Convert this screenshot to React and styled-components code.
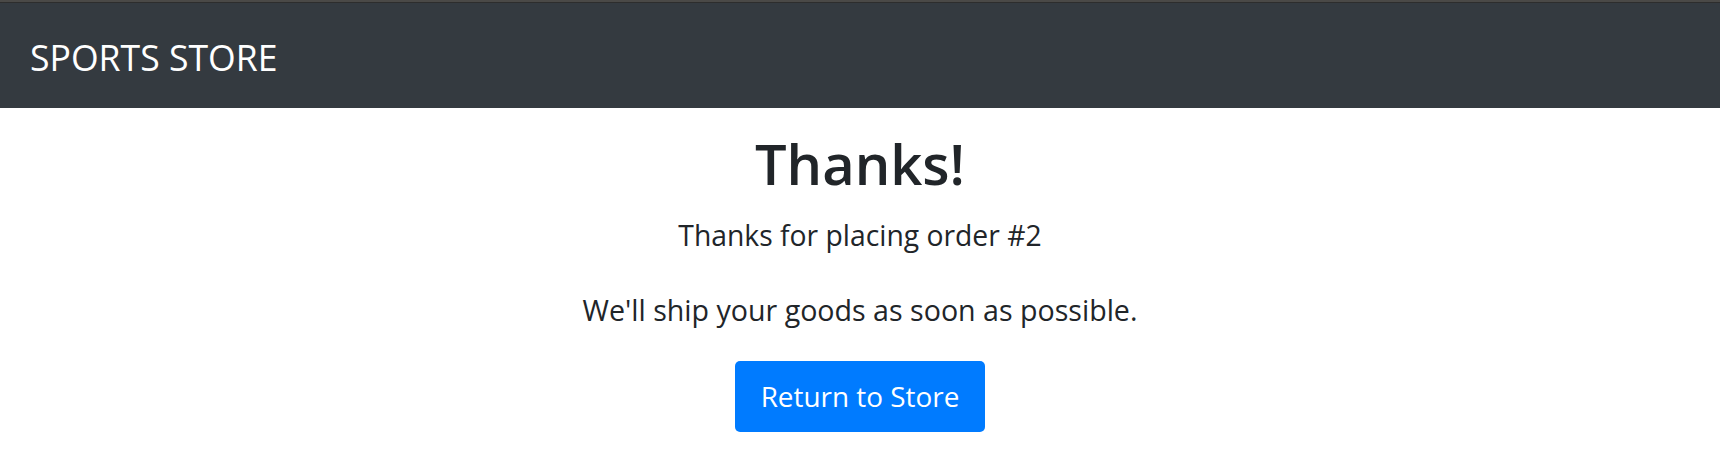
import React from "react";
import styled, { createGlobalStyle } from "styled-components";

const GlobalStyle = createGlobalStyle`
  html, body {
    margin: 0;
    padding: 0;
    background: #ffffff;
  }
  body {
    font-family: "Open Sans", "Noto Sans", "Liberation Sans", sans-serif;
    color: #212529;
  }
  * { box-sizing: border-box; }
`;

const Page = styled.div`
  width: 100%;
  min-height: 471px;
  display: flex;
  flex-direction: column;
`;

const WindowEdge = styled.div`
  height: 3px;
  background: #4a4947;
  border-bottom: 1px solid #2d2d2d;
`;

const Navbar = styled.nav`
  height: 105px;
  background: #343a40;
  padding: 30px 30px 0;
  display: flex;
  align-items: flex-start;
`;

const Brand = styled.span`
  color: #ffffff;
  font-size: 35.6px;
  line-height: 49px;
  font-weight: 400;
  white-space: nowrap;
`;

const Main = styled.main`
  padding-top: 21px;
  display: flex;
  flex-direction: column;
  align-items: center;
  text-align: center;
`;

const Title = styled.h1`
  margin: 0;
  font-size: 56px;
  line-height: 68px;
  font-weight: 600;
  color: #212529;
`;

const Text = styled.p`
  margin: ${(p) => p.$top}px 0 0;
  font-size: ${(p) => p.$size}px;
  line-height: 42px;
  font-weight: 400;
  color: #212529;
`;

const Button = styled.button`
  margin-top: 30px;
  height: 71px;
  padding: 0 26px;
  display: inline-flex;
  align-items: center;
  justify-content: center;
  border: none;
  border-radius: 5px;
  background: #007bff;
  color: #ffffff;
  font-family: inherit;
  font-size: 27.9px;
  line-height: 38px;
  font-weight: 400;
  cursor: pointer;
`;

export default function App() {
  return (
    <Page>
      <GlobalStyle />
      <WindowEdge />
      <Navbar>
        <Brand>SPORTS STORE</Brand>
      </Navbar>
      <Main>
        <Title>Thanks!</Title>
        <Text $top={17} $size={28.3}>Thanks for placing order #2</Text>
        <Text $top={32.5} $size={28.6}>We'll ship your goods as soon as possible.</Text>
        <Button>Return to Store</Button>
      </Main>
    </Page>
  );
}
